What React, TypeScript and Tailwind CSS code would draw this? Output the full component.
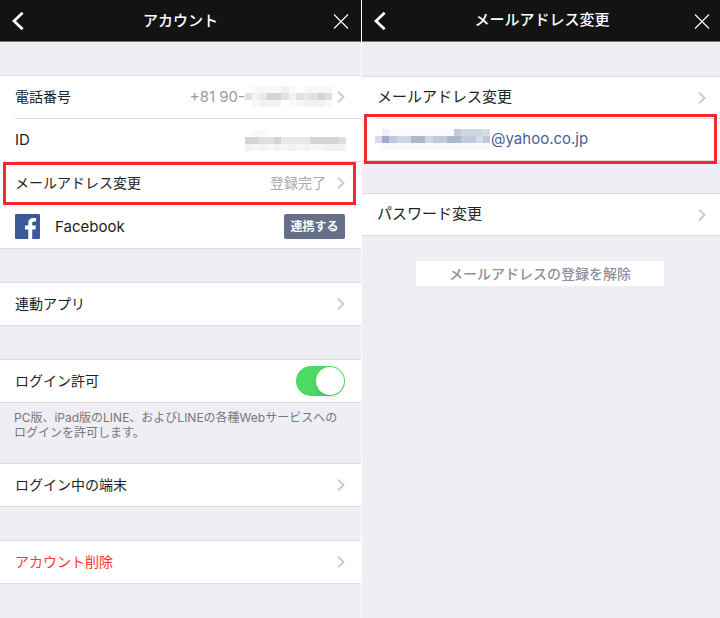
import React, { useState } from 'react';

// Each string is one line of the mask, each digit picks a shade (0 = empty)
const PHONE_MASK = ['011112101111', '423554243454', '012220112221'];
const ID_MASK = ['01100000000000', '55445333355554', '21212121211222'];
const EMAIL_MASK = ['0211111111154443', '3754466455665535', '0111111111111111'];

const GRAY_SHADES = ['#ffffff', '#f8f8f8', '#f2f2f2', '#e8e8e9', '#e0e0e1', '#d4d4d6'];
const BLUE_SHADES = ['#ffffff', '#f8fafc', '#eceff5', '#d6dde8', '#ced6e3', '#c1cadb', '#adb8cf', '#9facc9'];

type MaskProps = { lines: string[]; shades: string[]; className: string };

const Mask: React.FC<MaskProps> = ({ lines, shades, className }) => (
  <svg
    className={className}
    viewBox={`0 0 ${lines[0].length} ${lines.length}`}
    preserveAspectRatio="none"
    shapeRendering="crispEdges"
    aria-hidden="true"
  >
    {lines.map((line, y) =>
      line.split('').map((shade, x) => (
        <rect key={`${x}-${y}`} x={x} y={y} width="1" height="1" fill={shades[Number(shade)]} />
      ))
    )}
  </svg>
);

const Chevron = () => (
  <svg className="h-3 w-2 shrink-0" viewBox="0 0 8 12" fill="none" stroke="#c7c7cc" strokeWidth="1.8" aria-hidden="true">
    <path d="M1 0.6L6.6 6L1 11.4" />
  </svg>
);

const FacebookIcon = () => (
  <svg className="h-[25px] w-[25px] shrink-0" viewBox="0 0 25 25" aria-hidden="true">
    <rect width="25" height="25" rx="1.3" fill="#3b5998" />
    <path
      d="M17.2 25V15.4h3.2l.5-3.8h-3.7V9.3c0-1.1.3-1.8 1.9-1.8h2V4.1c-.4 0-1.5-.1-2.9-.1-2.9 0-4.9 1.7-4.9 4.9v2.7H10v3.8h3.3V25z"
      fill="#fff"
    />
  </svg>
);

const Header: React.FC<{ title: string; className: string }> = ({ title, className }) => (
  <header className={`flex h-[42px] items-center justify-between border-b border-[#77777a] bg-[#131313] pl-3 text-white ${className}`}>
    <button type="button" aria-label="戻る" className="w-4">
      <svg className="h-[18px] w-3" viewBox="0 0 12 18" fill="none" stroke="currentColor" strokeWidth="2.8" aria-hidden="true">
        <path d="M10.6 0.8L2 9L10.6 17.2" />
      </svg>
    </button>
    <h1 className="text-[15px] font-medium">{title}</h1>
    <button type="button" aria-label="閉じる" className="w-4">
      <svg className="h-4 w-4" viewBox="0 0 16 16" fill="none" stroke="currentColor" strokeWidth="1.1" aria-hidden="true">
        <path d="M1 1.5L15 15.5M15 1.5L1 15.5" />
      </svg>
    </button>
  </header>
);

const Group: React.FC<{ children: React.ReactNode }> = ({ children }) => (
  <section className="border-y border-[#dcdce0] bg-white pl-[15px]">{children}</section>
);

const App: React.FC = () => {
  const [loginAllowed, setLoginAllowed] = useState(true);

  return (
    <div className="grid min-h-screen grid-cols-[361fr_358fr] gap-px bg-white font-['Inter','Noto_Sans_CJK_JP',sans-serif] text-[#222222]">
      <main className="bg-[#efeef4] text-sm">
        <Header title="アカウント" className="pr-3" />

        <div className="mt-[33px]">
          <Group>
            <a href="#phone" className="flex h-[42px] items-center justify-between pr-4">
              電話番号
              <span className="flex items-center text-[15px] text-[#9a9a9e]">
                +81 90-
                <Mask lines={PHONE_MASK} shades={GRAY_SHADES} className="mr-[5px] h-[21px] w-[87px]" />
                <Chevron />
              </span>
            </a>
            <div className="flex h-[43px] items-center justify-between border-t border-[#dcdce0] pr-[15px]">
              <span className="text-[15px]">ID</span>
              <Mask lines={ID_MASK} shades={GRAY_SHADES} className="h-[21px] w-[101px]" />
            </div>
            <a href="#email" className="relative flex h-[43px] items-center justify-between border-t border-[#dcdce0] pr-4">
              メールアドレス変更
              <span className="flex items-center gap-[11px] text-[#aaaaae]">
                登録完了
                <Chevron />
              </span>
              <span className="absolute -bottom-px -left-3 right-[5px] top-0 border-3 border-[#f02a30]" />
            </a>
            <div className="flex h-11 items-center border-t border-[#dcdce0] pr-4">
              <FacebookIcon />
              <span className="ml-[15px] flex-1 text-[15px]">Facebook</span>
              <button type="button" className="h-[25px] w-[61px] rounded-xs bg-[#657088] text-xs font-bold text-white">
                連携する
              </button>
            </div>
          </Group>
        </div>

        <div className="mt-[33px]">
          <Group>
            <a href="#apps" className="flex h-[42px] items-center justify-between pr-4">
              連動アプリ
              <Chevron />
            </a>
          </Group>
        </div>

        <div className="mt-[33px]">
          <Group>
            <label className="flex h-[42px] cursor-pointer items-center justify-between pr-4">
              ログイン許可
              <input
                type="checkbox"
                role="switch"
                checked={loginAllowed}
                onChange={e => setLoginAllowed(e.target.checked)}
                className="flex h-[30px] w-[49px] appearance-none items-center rounded-full bg-[#d5d5da] px-px before:h-7 before:w-7 before:rounded-full before:bg-white before:shadow-md before:content-[''] checked:justify-end checked:bg-[#4cd964]"
              />
            </label>
          </Group>
          <p className="h-[60px] pl-[14px] pr-5 pt-[7px] text-xs leading-[15px] text-[#77777c]">
            PC版、iPad版のLINE、およびLINEの各種Webサービスへの
            <br />
            ログインを許可します。
          </p>
          <Group>
            <a href="#devices" className="flex h-[42px] items-center justify-between pr-4">
              ログイン中の端末
              <Chevron />
            </a>
          </Group>
        </div>

        <div className="mt-[33px]">
          <Group>
            <a href="#delete" className="flex h-[42px] items-center justify-between pr-4 text-[#ff3333]">
              アカウント削除
              <Chevron />
            </a>
          </Group>
        </div>
      </main>

      <main className="bg-[#efeef4] text-[15px]">
        <Header title="メールアドレス変更" className="pr-[10px]" />

        <div className="mt-[34px]">
          <Group>
            <a href="#change-email" className="flex h-[41px] items-center justify-between pr-[14px]">
              メールアドレス変更
              <Chevron />
            </a>
            <div className="relative flex h-[42px] items-center border-t border-[#dcdce0]">
              <Mask lines={EMAIL_MASK} shades={BLUE_SHADES} className="-ml-[2px] h-[21px] w-[115px]" />
              <span className="ml-px text-[#465f96]">@yahoo.co.jp</span>
              <span className="absolute -bottom-1 -left-[13px] right-[3px] -top-[5px] border-3 border-[#f02a30]" />
            </div>
          </Group>
        </div>

        <div className="mt-8">
          <Group>
            <a href="#change-password" className="flex h-[41px] items-center justify-between pr-[14px]">
              パスワード変更
              <Chevron />
            </a>
          </Group>
        </div>

        <div className="mt-[25px] pl-[54px] pr-14">
          <button type="button" className="h-[25px] w-full bg-white text-sm font-medium text-[#8b919d]">
            メールアドレスの登録を解除
          </button>
        </div>
      </main>
    </div>
  );
};

export default App;
